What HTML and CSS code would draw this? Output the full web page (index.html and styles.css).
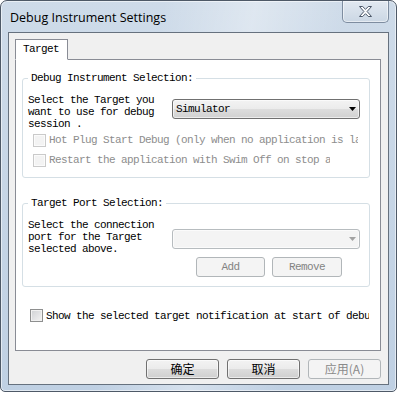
FILE: index.html
```html
<!DOCTYPE html>
<html lang="en">
<head>
    <meta charset="UTF-8">
    <title>Debug Instrument Settings</title>
    <link rel="stylesheet" href="styles.css">
</head>
<body>
    <div class="window">
        <div class="titlebar">
            <span class="title">Debug Instrument Settings</span>
            <button class="close-btn" title="Close">
                <svg width="13" height="11" viewBox="-0.5 -0.5 13 11">
                    <polygon points="0,0 3.2,0 6,2.8 8.8,0 12,0 7.6,5 12,10 8.8,10 6,7.2 3.2,10 0,10 4.4,5" fill="#fbfcfd" stroke="#4b5768" stroke-width="1"/>
                </svg>
            </button>
        </div>

        <div class="client">
            <div class="tabs">
                <div class="tab">Target</div>
            </div>

            <div class="tab-panel">
                <fieldset class="group">
                    <legend>Debug Instrument Selection:</legend>
                    <div class="group-row">
                        <div class="prompt">Select the Target you<br>want to use for debug<br>session .</div>
                        <div class="combo combo-main">
                            <span>Simulator</span>
                            <svg class="arrow" width="7" height="4" viewBox="0 0 7 4"><polygon points="0,0 7,0 3.5,4" fill="#000"/></svg>
                        </div>
                    </div>
                    <div class="check disabled">
                        <span class="box"></span>
                        <span class="check-text w-hot">Hot Plug Start Debug (only when no application is launched)</span>
                    </div>
                    <div class="check disabled">
                        <span class="box"></span>
                        <span class="check-text w-restart">Restart the application with Swim Off on stop and go</span>
                    </div>
                </fieldset>

                <fieldset class="group">
                    <legend>Target Port Selection:</legend>
                    <div class="group-row">
                        <div class="prompt">Select the connection<br>port for the Target<br>selected above.</div>
                        <div class="port-col">
                            <div class="combo disabled">
                                <span></span>
                                <svg class="arrow" width="7" height="4" viewBox="0 0 7 4"><polygon points="0,0 7,0 3.5,4" fill="#a2a2a2"/></svg>
                            </div>
                            <div class="port-buttons">
                                <button class="small-btn add-btn" disabled>Add</button>
                                <button class="small-btn remove-btn" disabled>Remove</button>
                            </div>
                        </div>
                    </div>
                </fieldset>

                <div class="check check-bottom">
                    <span class="box"></span>
                    <span class="check-text w-show">Show the selected target notification at start of debug session</span>
                </div>
            </div>

            <div class="dialog-buttons">
                <button class="btn">确定</button>
                <button class="btn">取消</button>
                <button class="btn" disabled>应用(A)</button>
            </div>
        </div>
    </div>
</body>
</html>
```

FILE: styles.css
```css
* {
    box-sizing: border-box;
}

body {
    margin: 0;
    background: #fff;
    font-family: "Liberation Mono", monospace;
    font-size: 11px;
    letter-spacing: -0.6px;
    color: #000;
}

.window {
    width: 397px;
    height: 392px;
    border: 1px solid #4e5967;
    border-radius: 7px 7px 5px 5px;
    padding: 0 7px 6px;
    display: flex;
    flex-direction: column;
    background:
        linear-gradient(100deg, rgba(255,255,255,0) 35%, rgba(255,255,255,0.35) 55%, rgba(255,255,255,0) 75%),
        linear-gradient(#cedbe9, #bfd0e3);
    box-shadow: inset 0 0 0 1px rgba(255,255,255,0.55);
}

.titlebar {
    height: 31px;
    flex: none;
    display: flex;
    align-items: flex-start;
}

.title {
    font-family: "Open Sans", "Noto Sans", sans-serif;
    font-size: 12.5px;
    letter-spacing: 0;
    line-height: 33px;
    padding-left: 2px;
    color: #000;
}

.close-btn {
    margin-left: auto;
    width: 47px;
    height: 22px;
    padding: 0;
    border: 1px solid #7e8da0;
    border-top: none;
    border-radius: 0 0 5px 5px;
    background: linear-gradient(#e2e9f1, #cbd7e4);
    box-shadow: inset 0 0 0 1px rgba(255,255,255,0.5);
    display: flex;
    align-items: center;
    justify-content: center;
}

.client {
    flex: 1;
    border: 1px solid #66717e;
    background: #f0f0f0;
    padding: 6px 7px 5px 6px;
    display: flex;
    flex-direction: column;
}

.tabs {
    display: flex;
}

/* selected tab sits over the panel's top border */
.tab {
    position: relative;
    z-index: 1;
    height: 21px;
    margin-bottom: -1px;
    padding: 0 8px 0 7px;
    border: 1px solid #898c95;
    border-bottom-color: #fff;
    background: #fff;
    line-height: 19px;
}

.tab-panel {
    height: 292px;
    flex: none;
    border: 1px solid #898c95;
    background: #fff;
    padding-top: 12px;
}

.group {
    margin: 0 10px 0 6px;
    padding: 10px 0 7px 5px;
    border: 1px solid #d5dfe5;
    border-radius: 3px;
    min-width: 0;
}

.group + .group {
    margin-top: 19px;
    padding-bottom: 9px;
}

.group legend {
    padding: 0 3px;
    line-height: 12px;
}

.group-row {
    display: flex;
}

.prompt {
    width: 144px;
    flex: none;
    line-height: 12px;
}

.combo {
    width: 188px;
    height: 20px;
    border: 1px solid #707070;
    border-radius: 3px;
    padding: 0 3px 0 3px;
    display: flex;
    align-items: center;
    justify-content: space-between;
    background: linear-gradient(#f3f3f3 0%, #ebebeb 50%, #dddddd 50%, #d1d1d1 100%);
    box-shadow: inset 0 0 0 1px rgba(255,255,255,0.6);
}

.combo-main {
    margin-top: 5px;
}

.combo.disabled {
    border-color: #b7bcbf;
    background: #f4f4f4;
}

.port-col {
    display: flex;
    flex-direction: column;
    padding-top: 10px;
}

.port-buttons {
    display: flex;
    gap: 7px;
    margin: 8px 0 0 24px;
}

.small-btn {
    height: 20px;
    padding: 0;
    border: 1px solid #b1b6b9;
    border-radius: 3px;
    background: #f4f4f4;
    color: #838383;
    font: inherit;
    letter-spacing: inherit;
}

.add-btn {
    width: 69px;
}

.remove-btn {
    width: 70px;
}

.check {
    display: flex;
    align-items: center;
    height: 20px;
    padding-left: 5px;
}

.box {
    width: 13px;
    height: 13px;
    flex: none;
    border: 1px solid #8e8f8f;
    background: linear-gradient(135deg, #cfd1d4, #f3f3f3);
    box-shadow: inset 0 0 0 1px #f1f1f1;
}

.check-text {
    margin-left: 3px;
    white-space: nowrap;
    overflow: hidden;
}

.check.disabled .box {
    border-color: #cacaca;
    background: #f3f3f3;
    box-shadow: inset 0 0 0 1px #fbfbfb;
}

.check.disabled .check-text {
    color: #8d8d8d;
}

.w-hot {
    width: 309px;
}

.w-restart {
    width: 281px;
}

.check-bottom {
    height: 13px;
    margin: 22px 0 0 14px;
    padding-left: 0;
}

.w-show {
    width: 323px;
}

.dialog-buttons {
    display: flex;
    justify-content: flex-end;
    gap: 8px;
    margin-top: 8px;
}

.btn {
    width: 73px;
    height: 20px;
    padding: 0;
    border: 1px solid #707070;
    border-radius: 3px;
    background: linear-gradient(#f3f3f3 0%, #ebebeb 50%, #dddddd 50%, #cfcfcf 100%);
    box-shadow: inset 0 0 0 1px rgba(255,255,255,0.6);
    font-family: "Noto Sans CJK SC", sans-serif;
    font-size: 12px;
    letter-spacing: 0;
    line-height: 18px;
    color: #000;
}

.btn:disabled {
    border-color: #b1b6b9;
    background: #f4f4f4;
    box-shadow: none;
    color: #8a8a8a;
}
```
